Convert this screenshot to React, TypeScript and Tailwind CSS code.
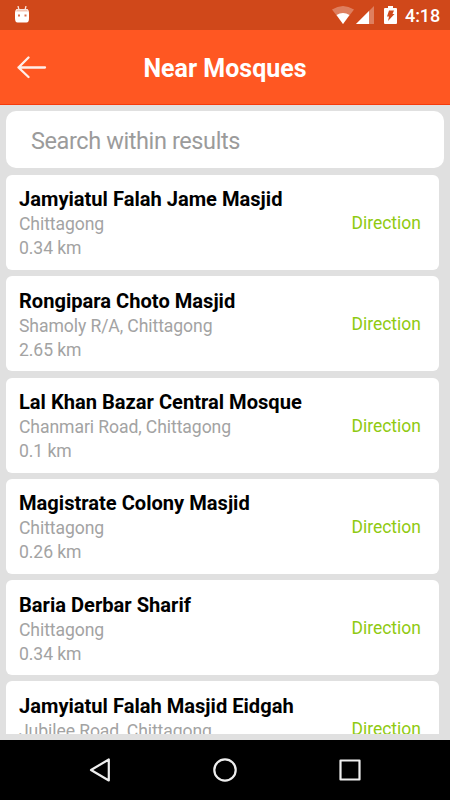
interface Mosque {
  name: string
  address: string
  distance?: string
}

const mosques: Mosque[] = [
  { name: 'Jamyiatul Falah Jame Masjid', address: 'Chittagong', distance: '0.34 km' },
  { name: 'Rongipara Choto Masjid', address: 'Shamoly R/A, Chittagong', distance: '2.65 km' },
  { name: 'Lal Khan Bazar Central Mosque', address: 'Chanmari Road, Chittagong', distance: '0.1 km' },
  { name: 'Magistrate Colony Masjid', address: 'Chittagong', distance: '0.26 km' },
  { name: 'Baria Derbar Sharif', address: 'Chittagong', distance: '0.34 km' },
  { name: 'Jamyiatul Falah Masjid Eidgah', address: 'Jubilee Road, Chittagong' },
]

function StatusBar() {
  return (
    <div className="flex h-[30px] shrink-0 items-center bg-[#d0481a] pl-[14px] pr-[10px] text-white">
      <svg className="h-[18px] w-4" viewBox="0 0 16 18">
        <path d="M4 0l1 4M12 0l-1 4" stroke="#fff" strokeOpacity="0.85" strokeWidth="1.3" />
        <path d="M3 3h10q1.5 0 2 3.5V12q0 4.5-2.5 4.5h-9Q1 16.500 1 12V6.500q.5-3.5 2-3.5z" fill="#fff" />
        <path d="M3 3.500h10l1 2H2z" fill="#f3c4b3" />
        <path d="M4 8.500h2v2H4zM10.500 8.500h2v2h-2z" fill="#d9714e" />
      </svg>
      <div className="ml-auto flex items-center">
        <svg className="h-[18px] w-[22px]" viewBox="0 0 22 18">
          <path d="M0 3.5Q11-3.5 22 3.5L11 18z" fill="#fff" fillOpacity="0.3" />
          <path d="M4.5 9Q11 5 17.5 9L11 18z" fill="#fff" />
        </svg>
        <svg className="ml-0.5 h-[18px] w-[18px]" viewBox="0 0 18 18">
          <path d="M18 0v18H0z" fill="#fff" fillOpacity="0.3" />
          <path d="M13 5v13H0z" fill="#fff" />
        </svg>
        <svg className="ml-[10px] h-[18px] w-[13px]" viewBox="0 0 13 18">
          <path d="M4 0h5v2h3q1 0 1 1v14q0 1-1 1H1q-1 0-1-1V3q0-1 1-1h3z" fill="#fff" />
          <path d="M5 4.500h5L8.500 8H10.500L4 15l1-4.500H3z" fill="#d0481a" />
        </svg>
        <span className="ml-2 w-[35px] pt-0.5 text-[18px] leading-6 font-medium tracking-[-0.1px]">4:18</span>
      </div>
    </div>
  )
}

function Header() {
  return (
    <header className="grid h-[75px] shrink-0 grid-cols-[60px_1fr_60px] items-center border-b border-[#f53b0c] bg-[#ff5722]">
      <svg className="ml-[17px] h-6 w-[30px]" viewBox="0 0 30 24" fill="none" stroke="#fff" strokeOpacity="0.9" strokeWidth="2.3" strokeLinecap="round" strokeLinejoin="round">
        <path d="M11.5 2.5L1.5 12.5l10 9.5M1.5 12.5H28" />
      </svg>
      <h1 className="pt-1 text-center text-[25px] leading-8 font-bold text-white">Near Mosques</h1>
    </header>
  )
}

function MosqueCard({ mosque }: { mosque: Mosque }) {
  return (
    <div className="flex h-[95px] shrink-0 justify-between rounded-[6px] bg-white pr-[18px] pl-[13px]">
      <div className="pt-[11.4px]">
        <h2 className="text-[20.1px] leading-[26px] font-bold text-black">{mosque.name}</h2>
        <p className="text-[17.6px] leading-6 tracking-[-0.09px] text-[#a3a3a3]">{mosque.address}</p>
        {mosque.distance && (
          <p className="text-[17.6px] leading-6 tracking-[-0.09px] text-[#a3a3a3]">{mosque.distance}</p>
        )}
      </div>
      <button className="self-center pt-px text-[17.5px] leading-6 text-[#8fca11]">Direction</button>
    </div>
  )
}

function NavigationBar() {
  return (
    <nav className="flex h-[60px] shrink-0 items-center justify-center gap-[101px] bg-black">
      <svg className="h-6 w-6" viewBox="0 0 24 24" fill="none" stroke="#eee" strokeWidth="2.2" strokeLinejoin="round">
        <path d="M20.8 1.5v21L3 12z" />
      </svg>
      <svg className="h-6 w-6" viewBox="0 0 24 24" fill="none" stroke="#eee" strokeWidth="2.2">
        <circle cx="12" cy="12" r="10.7" />
      </svg>
      <svg className="h-6 w-6" viewBox="0 0 24 24" fill="none" stroke="#eee" strokeWidth="2.2" strokeLinejoin="round">
        <rect x="2.5" y="2.5" width="19" height="19" />
      </svg>
    </nav>
  )
}

export default function App() {
  return (
    <div className="flex h-[800px] w-[450px] flex-col overflow-hidden bg-[#e0e0e0] font-['Roboto',sans-serif]">
      <StatusBar />
      <Header />
      <main className="flex min-h-0 flex-1 flex-col px-1.5 pt-1.5 pb-1.5">
        <input
          className="h-[57px] w-full shrink-0 rounded-[10px] bg-white px-[25px] pt-0.5 text-[23.5px] tracking-[-0.4px] outline-none placeholder:text-[#9b9b9b]"
          placeholder="Search within results"
        />
        <div className="mt-[7px] mr-[5px] flex min-h-0 flex-1 flex-col gap-[6.3px] overflow-hidden">
          {mosques.map((m) => (
            <MosqueCard key={m.name} mosque={m} />
          ))}
        </div>
      </main>
      <NavigationBar />
    </div>
  )
}
